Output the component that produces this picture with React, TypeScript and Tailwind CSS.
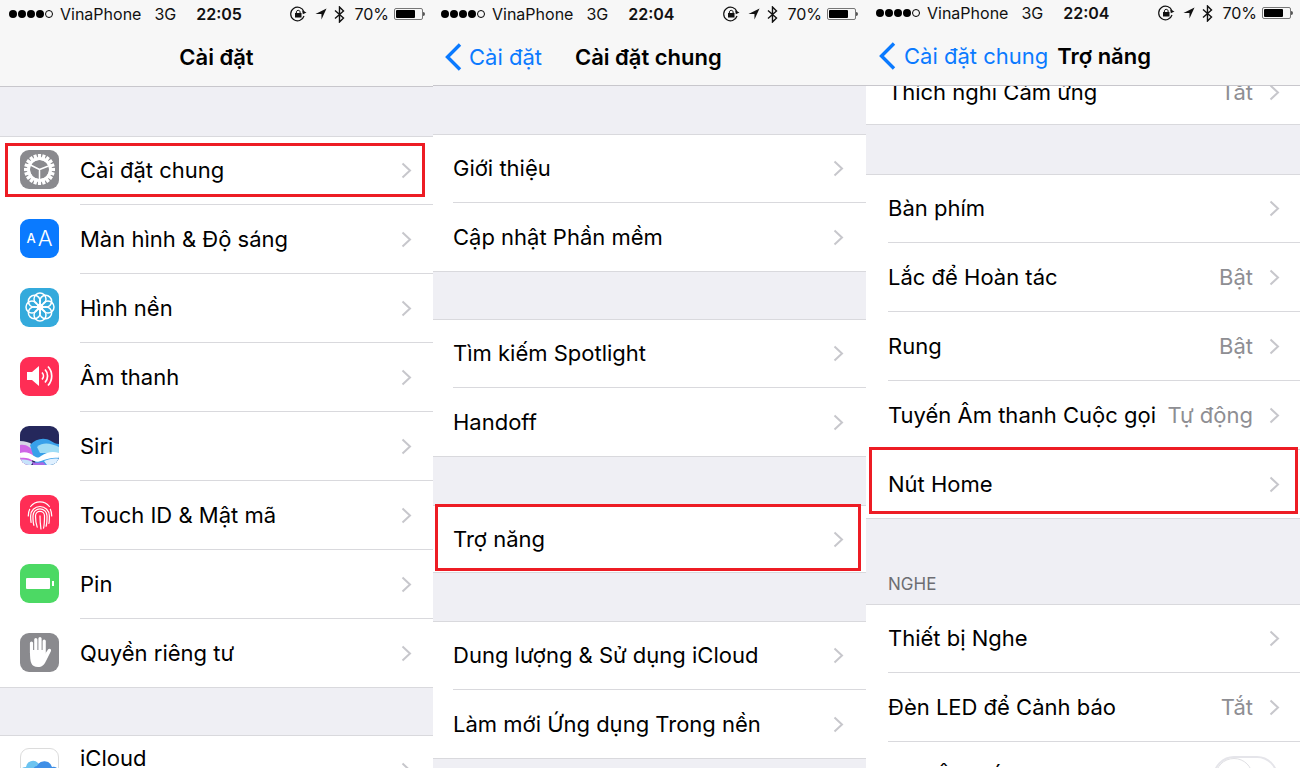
import type { ReactNode } from "react";

const font = "font-['Inter','Liberation_Sans',sans-serif]";

function IosChevron() {
  return (
    <svg width="11" height="17" viewBox="0 0 11 17" className="shrink-0">
      <path d="M1.500 1.500 9 8.500l-7.500 7" fill="none" stroke="#c7c7cc" strokeWidth="2" />
    </svg>
  );
}

function StatusBar({ time, className }: { time: string; className: string }) {
  return (
    <div className={`flex items-center text-[16px] text-[#111] ${className}`}>
      <div className="flex items-center gap-[1px]">
        {[0, 1, 2, 3].map((i) => (
          <span key={i} className="h-[8px] w-[8px] rounded-full bg-black" />
        ))}
        <span className="h-[8px] w-[8px] rounded-full border border-black" />
      </div>
      <span className="ml-[7px]">VinaPhone</span>
      <span className="ml-[13px]">3G</span>
      <span className="ml-[20px] font-semibold">{time}</span>
      <div className="ml-auto flex items-center">
        <svg width="17" height="16" viewBox="0 0 17 16">
          <path d="M14 10A6.800 6.800 0 1 1 14 6" fill="none" stroke="#111" strokeWidth="1.200" />
          <path d="m16.500 6.500-3.700 1.800-.6-3.800z" fill="#111" />
          <rect x="5" y="7" width="6.500" height="4.500" fill="#111" />
          <path d="M6.400 7V5.800a1.900 1.900 0 0 1 3.700 0V7" fill="none" stroke="#111" />
        </svg>
        <svg width="12" height="12" viewBox="0 0 13 13" className="ml-[8px]">
          <path d="M12.500.5 7 12.500V6.500H.5z" fill="#111" />
        </svg>
        <svg width="11" height="17" viewBox="0 0 11 17" className="ml-[7px]">
          <path d="M1 4.500 9.500 12 5.500 16V1l4 4L1 12.500" fill="none" stroke="#111" strokeWidth="1.400" />
        </svg>
        <span className="ml-[9px]">70%</span>
        <div className="ml-[5px] flex items-center">
          <div className="h-[12px] w-[29px] rounded-[2px] border border-[#777] p-[1px]">
            <div className="h-full w-[19px] rounded-[1px] bg-black" />
          </div>
          <div className="h-[4px] w-[2px] rounded-r-sm bg-[#555]" />
        </div>
      </div>
    </div>
  );
}

function BackChevron() {
  return (
    <svg width="20" height="30" viewBox="0 0 20 30">
      <path d="M16 2.500 3.500 15 16 27.500" fill="none" stroke="#0a7aff" strokeWidth="3.400" />
    </svg>
  );
}

function Row({
  icon,
  label,
  value,
  last,
  control,
  className = "h-[69px] pl-[20px]",
  endClass = "pr-[21px]",
}: {
  icon?: ReactNode;
  label: string;
  value?: string;
  last?: boolean;
  control?: ReactNode;
  className?: string;
  endClass?: string;
}) {
  return (
    <div className={`flex shrink-0 items-center ${className}`}>
      {icon && <div className="mb-[3px] mr-[21px] shrink-0">{icon}</div>}
      <div className={`flex h-full min-w-0 flex-1 items-center ${endClass} ${last ? "" : "border-b border-[#d9d9dd]"}`}>
        <span className="whitespace-nowrap text-[22px] text-black">{label}</span>
        {value && <span className="ml-auto whitespace-nowrap text-[22px] text-[#8e8e93]">{value}</span>}
        {control ? (
          <div className="ml-auto">{control}</div>
        ) : (
          <div className={value ? "ml-[16px]" : "ml-auto"}>
            <IosChevron />
          </div>
        )}
      </div>
    </div>
  );
}

function Group({ children }: { children: ReactNode }) {
  return <div className="shrink-0 bg-white shadow-[inset_0_1px_0_#d9d9dd,inset_0_-1px_0_#d9d9dd]">{children}</div>;
}

function Tile({ bg, children }: { bg: string; children: ReactNode }) {
  return (
    <div className={`flex h-[39px] w-[39px] items-center justify-center overflow-hidden rounded-[9px] ${bg}`}>
      {children}
    </div>
  );
}

const gearTeeth = Array.from({ length: 20 }, (_, i) => i * 18);

const icons: Record<string, ReactNode> = {
  gear: (
    <Tile bg="bg-[#8a8a8e]">
      <svg width="35" height="35" viewBox="0 0 35 35">
        {gearTeeth.map((a) => (
          <rect key={a} x="15.900" y="2" width="3.200" height="6" fill="#fff" transform={`rotate(${a} 17.500 17.500)`} />
        ))}
        <circle cx="17.500" cy="17.500" r="11" fill="none" stroke="#fff" strokeWidth="3" />
        <path d="M17.500 17.500V28M17.500 17.500 8.500 13M17.500 17.500l9-3.500" stroke="#fff" strokeWidth="1.500" />
      </svg>
    </Tile>
  ),
  aa: (
    <Tile bg="bg-[#0a7aff]">
      <div className="flex items-center gap-[2px] leading-none text-white">
        <span className="text-[13px] font-medium">A</span>
        <span className="text-[22px] font-light">A</span>
      </div>
    </Tile>
  ),
  flower: (
    <Tile bg="bg-[#34aadc]">
      <svg width="34" height="34" viewBox="0 0 34 34">
        {[0, 45, 90, 135, 180, 225, 270, 315].map((a) => (
          <circle key={a} cx="17" cy="9" r="6" fill="none" stroke="#fff" strokeWidth="1.500" transform={`rotate(${a} 17 17)`} />
        ))}
        <circle cx="17" cy="17" r="2.500" fill="#fff" />
      </svg>
    </Tile>
  ),
  sound: (
    <Tile bg="bg-[#ff2d55]">
      <svg width="30" height="26" viewBox="0 0 30 26">
        <path d="M2 9h5l7-6v20l-7-6H2z" fill="#fff" />
        <path d="M17 9.500a5 5 0 0 1 0 7M20 6.500a9.500 9.500 0 0 1 0 13M23 3.500a14 14 0 0 1 0 19" fill="none" stroke="#fff" strokeWidth="1.700" />
      </svg>
    </Tile>
  ),
  siri: (
    <div className="h-[39px] w-[39px] overflow-hidden rounded-[9px] bg-[#25285c]">
      <svg width="39" height="39" viewBox="0 0 39 39">
        <path d="M0 15c5 0 9 1 13 4L9 39H0z" fill="#d6d6e6" />
        <path d="M0 19c6-1 11 2 14 8l-3 12H0z" fill="#cf67e6" />
        <path d="M10 19c6-7 15-8 21-4 3 2 5 3 8 3v21H16z" fill="#38a0ea" />
        <path d="M17 21c6-5 13-4 22 0v6H20z" fill="#9fdcf5" />
        <path d="M0 27c5-2 10 0 14 3 4 2 4 2 7 0 6-4 12-5 18-3v5c-6-1-12 1-18 3-3 1-4 1-7 0-5-3-9-4-14-3z" fill="#fff" />
        <path d="M0 34c4-1 9 0 13 2l-2 3H0z" fill="#c6e3fb" />
        <path d="M12 36c4 1 7 1 11 0l3 3H13z" fill="#a86ae6" />
        <path d="M24 35c5-2 10-3 15-2v6H27z" fill="#dff0ff" />
      </svg>
    </div>
  ),
  touch: (
    <Tile bg="bg-[#ff2d55]">
      <svg width="30" height="32" viewBox="0 0 32 34" fill="none" stroke="#fff" strokeWidth="1.300" strokeLinecap="round">
        <path d="M6 9a12.500 12.500 0 0 1 20 0" />
        <path d="M3.500 19c0-3 .5-5 1.500-7M28.500 19c0-3-.5-5-1.500-7" />
        <path d="M6.500 26c-.5-3-.5-5-.5-7a10 10 0 0 1 20 0c0 3 0 6-.5 8" />
        <path d="M9.500 29c-1-3-1-7-1-10a7.500 7.500 0 0 1 15 0c0 4 0 8-1 11" />
        <path d="M13 31c-1.500-4-1.800-8-1.800-12a4.800 4.800 0 0 1 9.600 0c0 4 0 9-1 13" />
        <path d="M16 19c0 5 .3 9 1 14" />
      </svg>
    </Tile>
  ),
  battery: (
    <Tile bg="bg-[#4cd964]">
      <div className="flex items-center">
        <div className="h-[11px] w-[24px] rounded-[1px] bg-white" />
        <div className="ml-[2px] h-[5px] w-[2px] bg-white" />
      </div>
    </Tile>
  ),
  hand: (
    <Tile bg="bg-[#8a8a8e]">
      <svg width="24" height="32" viewBox="0 0 24 32">
        <path d="M2 16C2 26 3 31 10 31c4 0 6-2 8-6l5-10c.6-2-2-3-3-1.500L17 18V14H2z" fill="#fff" />
        <path d="M3.500 17V7M7.800 16V3.500M12 16V2.500M16.200 18V5" stroke="#fff" strokeWidth="3.200" strokeLinecap="round" />
      </svg>
    </Tile>
  ),
  cloud: (
    <div className="h-[39px] w-[39px] overflow-hidden rounded-[9px] border border-[#dcdcdc] bg-white">
      <svg width="37" height="37" viewBox="0 0 37 37">
        <path d="M4 30a6 6 0 0 1 1-12 7 7 0 0 1 12-4l6 16z" fill="#6cc3f0" />
        <path d="M12 30c-3-8 1-13 4-13a8 8 0 0 1 15 1 6 6 0 0 1 3 12z" fill="#3f8fe6" />
      </svg>
    </div>
  ),
};

const settingsRows = [
  { icon: "aa", label: "Màn hình & Độ sáng" },
  { icon: "flower", label: "Hình nền" },
  { icon: "sound", label: "Âm thanh" },
  { icon: "siri", label: "Siri" },
  { icon: "touch", label: "Touch ID & Mật mã" },
  { icon: "battery", label: "Pin" },
  { icon: "hand", label: "Quyền riêng tư" },
];

const midRow = "h-[69px] pl-[20px]";
const midEnd = "pr-[22px]";
const rightRow = "h-[69px] pl-[22px]";
const rightEnd = "pr-[20px]";

export default function App() {
  return (
    <div className={`flex h-[768px] w-[1300px] overflow-hidden bg-white ${font}`}>
      {/* cot 1 */}
      <div className="relative flex h-full w-[433px] shrink-0 flex-col overflow-hidden bg-[#efeff4]">
        <div className="relative z-10 h-[87px] shrink-0 border-b border-[#c8c7cc] bg-[#f7f7f7]">
          <StatusBar time="22:05" className="h-[28px] pl-[9px] pr-[8px]" />
          <div className="flex h-[58px] items-center justify-center text-[22px] font-semibold text-black">Cài đặt</div>
        </div>
        <div className="h-[49px] shrink-0" />
        <Group>
          <Row icon={icons.gear} label="Cài đặt chung" />
          {settingsRows.map((r, i) => (
            <Row key={r.label} icon={icons[r.icon]} label={r.label} last={i === settingsRows.length - 1} />
          ))}
        </Group>
        <div className="h-[47px] shrink-0" />
        <Group>
          <div className="flex h-[69px] pl-[20px] pr-[21px] pt-[13px]">
            <div className="mr-[21px] shrink-0">{icons.cloud}</div>
            <span className="-mt-[3px] text-[22px] leading-[26px] text-black">iCloud</span>
            <div className="ml-auto pt-[14px]">
              <IosChevron />
            </div>
          </div>
        </Group>
        <div className="absolute left-[5px] top-[143px] h-[54px] w-[420px] border-[3px] border-[#ed1c24]" />
      </div>

      {/* cot 2 */}
      <div className="relative flex h-full w-[433px] shrink-0 flex-col overflow-hidden bg-[#efeff4]">
        <div className="relative z-10 h-[86px] shrink-0 border-b border-[#c8c7cc] bg-[#f7f7f7]">
          <StatusBar time="22:04" className="h-[28px] pl-[8px] pr-[8px]" />
          <div className="flex h-[58px] items-center pl-[11px] text-[22px]">
            <BackChevron />
            <span className="ml-[5px] text-[#0a7aff]">Cài đặt</span>
            <span className="ml-[33px] font-semibold text-black">Cài đặt chung</span>
          </div>
        </div>
        <div className="h-[48px] shrink-0" />
        <Group>
          <Row className={midRow} endClass={midEnd} label="Giới thiệu" />
          <Row className={midRow} endClass={midEnd} label="Cập nhật Phần mềm" last />
        </Group>
        <div className="h-[47px] shrink-0" />
        <Group>
          <Row className={midRow} endClass={midEnd} label="Tìm kiếm Spotlight" />
          <Row className={midRow} endClass={midEnd} label="Handoff" last />
        </Group>
        <div className="h-[48px] shrink-0" />
        <Group>
          <Row className="h-[68px] pl-[20px]" endClass={midEnd} label="Trợ năng" last />
        </Group>
        <div className="h-[48px] shrink-0" />
        <Group>
          <Row className={midRow} endClass={midEnd} label="Dung lượng & Sử dụng iCloud" />
          <Row className={midRow} endClass={midEnd} label="Làm mới Ứng dụng Trong nền" last />
        </Group>
        <div className="absolute left-[2px] top-[504px] h-[67px] w-[426px] border-[3px] border-[#ed1c24]" />
      </div>

      {/* cot 3 */}
      <div className="relative flex h-full w-[434px] shrink-0 flex-col overflow-hidden bg-[#efeff4]">
        <div className="relative z-10 h-[86px] shrink-0 border-b border-[#c8c7cc] bg-[#f7f7f7]">
          <StatusBar time="22:04" className="h-[26px] pl-[10px] pr-[7px]" />
          <div className="flex h-[60px] items-center pl-[12px] text-[22px]">
            <BackChevron />
            <span className="ml-[6px] text-[#0a7aff]">Cài đặt chung</span>
            <span className="ml-[9px] font-semibold text-black">Trợ năng</span>
          </div>
        </div>
        <div className="h-[39px] shrink-0 overflow-hidden border-b border-[#d9d9dd] bg-white">
          <div className="-mt-[28px]">
            <Row className={rightRow} endClass={rightEnd} label="Thích nghi Cảm ứng" value="Tắt" last />
          </div>
        </div>
        <div className="h-[49px] shrink-0" />
        <Group>
          <Row className={rightRow} endClass={rightEnd} label="Bàn phím" />
          <Row className={rightRow} endClass={rightEnd} label="Lắc để Hoàn tác" value="Bật" />
          <Row className={rightRow} endClass={rightEnd} label="Rung" value="Bật" />
          <Row className={rightRow} endClass={rightEnd} label="Tuyến Âm thanh Cuộc gọi" value="Tự động" />
          <Row className={rightRow} endClass={rightEnd} label="Nút Home" last />
        </Group>
        <div className="flex h-[85px] shrink-0 items-end pb-[7px] pl-[22px] text-[17px] text-[#6d6d72]">NGHE</div>
        <Group>
          <Row className={rightRow} endClass={rightEnd} label="Thiết bị Nghe" />
          <Row className={rightRow} endClass={rightEnd} label="Đèn LED để Cảnh báo" value="Tắt" />
          <Row
            className={rightRow}
            endClass="pr-[22px]"
            label="Đơn Âm Sắc"
            last
            control={
              <div className="h-[42px] w-[65px] rounded-full border-2 border-[#e5e5ea] bg-white">
                <div className="h-full w-[38px] rounded-full border border-[#e0e0e4]" />
              </div>
            }
          />
        </Group>
        <div className="absolute left-[3px] top-[447px] h-[67px] w-[429px] border-[3px] border-[#ed1c24]" />
      </div>
    </div>
  );
}
